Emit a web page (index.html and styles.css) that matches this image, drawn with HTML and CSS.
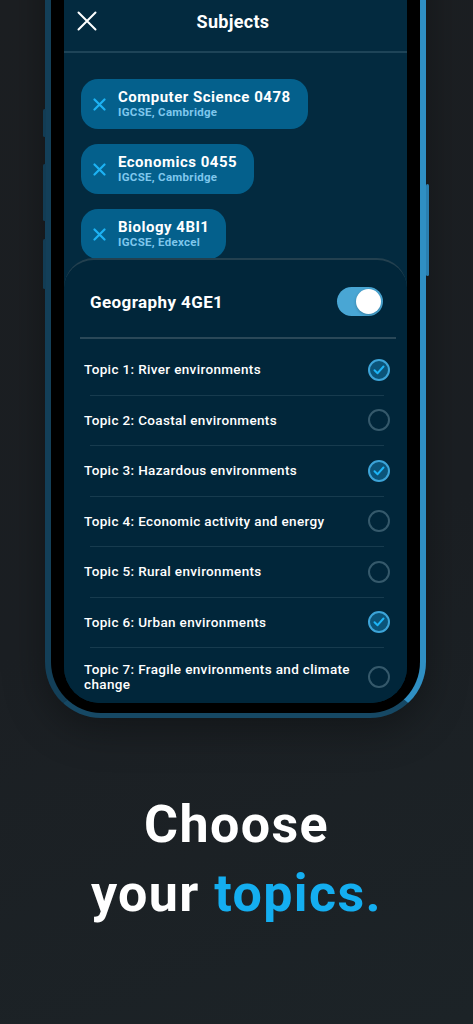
FILE: index.html
```html
<!DOCTYPE html>
<html lang="en">
<head>
<meta charset="utf-8">
<title>Choose your topics</title>
<link rel="stylesheet" href="styles.css">
</head>
<body>
<main class="page">
  <div class="phone">
    <span class="btn btn-l1"></span>
    <span class="btn btn-l2"></span>
    <span class="btn btn-l3"></span>
    <span class="btn btn-r1"></span>
    <div class="screen">
      <header class="app-header">
        <svg class="close" width="20" height="20" viewBox="0 0 20 20"><path d="M1.5 1.5 L18.5 18.5 M18.5 1.5 L1.5 18.5" stroke="#fff" stroke-width="2" stroke-linecap="round" fill="none"/></svg>
        <h1 class="title">Subjects</h1>
        <span></span>
      </header>
      <section class="chips">
        <div class="chip">
          <svg class="chip-x" width="13" height="13" viewBox="0 0 13 13"><path d="M1.5 1.5 L11.5 11.5 M11.5 1.5 L1.5 11.5" stroke="#1db2f3" stroke-width="2.2" stroke-linecap="round" fill="none"/></svg>
          <div class="chip-text"><div class="chip-title">Computer Science 0478</div><div class="chip-sub">IGCSE, Cambridge</div></div>
        </div>
        <div class="chip">
          <svg class="chip-x" width="13" height="13" viewBox="0 0 13 13"><path d="M1.5 1.5 L11.5 11.5 M11.5 1.5 L1.5 11.5" stroke="#1db2f3" stroke-width="2.2" stroke-linecap="round" fill="none"/></svg>
          <div class="chip-text"><div class="chip-title">Economics 0455</div><div class="chip-sub">IGCSE, Cambridge</div></div>
        </div>
        <div class="chip">
          <svg class="chip-x" width="13" height="13" viewBox="0 0 13 13"><path d="M1.5 1.5 L11.5 11.5 M11.5 1.5 L1.5 11.5" stroke="#1db2f3" stroke-width="2.2" stroke-linecap="round" fill="none"/></svg>
          <div class="chip-text"><div class="chip-title">Biology 4BI1</div><div class="chip-sub">IGCSE, Edexcel</div></div>
        </div>
      </section>
      <section class="sheet">
        <div class="sheet-head">
          <span class="subject">Geography 4GE1</span>
          <span class="toggle"><span class="knob"></span></span>
        </div>
        <div class="sheet-rule"></div>
        <ul class="topics">
          <li class="topic"><span>Topic 1: River environments</span><span class="check on"><svg width="12" height="10" viewBox="0 0 12 10"><path d="M1.5 5.2 L4.6 8.2 L10.5 1.5" stroke="#1cb4f6" stroke-width="2" fill="none" stroke-linecap="round" stroke-linejoin="round"/></svg></span></li>
          <li class="topic"><span>Topic 2: Coastal environments</span><span class="check"></span></li>
          <li class="topic"><span>Topic 3: Hazardous environments</span><span class="check on"><svg width="12" height="10" viewBox="0 0 12 10"><path d="M1.5 5.2 L4.6 8.2 L10.5 1.5" stroke="#1cb4f6" stroke-width="2" fill="none" stroke-linecap="round" stroke-linejoin="round"/></svg></span></li>
          <li class="topic"><span>Topic 4: Economic activity and energy</span><span class="check"></span></li>
          <li class="topic"><span>Topic 5: Rural environments</span><span class="check"></span></li>
          <li class="topic"><span>Topic 6: Urban environments</span><span class="check on"><svg width="12" height="10" viewBox="0 0 12 10"><path d="M1.5 5.2 L4.6 8.2 L10.5 1.5" stroke="#1cb4f6" stroke-width="2" fill="none" stroke-linecap="round" stroke-linejoin="round"/></svg></span></li>
          <li class="topic tall"><span>Topic 7: Fragile environments and climate change</span><span class="check"></span></li>
        </ul>
      </section>
    </div>
  </div>
  <h2 class="headline">Choose<br>your <span class="accent">topics.</span></h2>
</main>
</body>
</html>
```

FILE: styles.css
```css
* { box-sizing: border-box; }
html, body { margin: 0; padding: 0; }
body {
  width: 473px;
  height: 1024px;
  overflow: hidden;
  background: linear-gradient(160deg, #1c1f22 0%, #1b1f23 55%, #1c2327 100%);
  font-family: Roboto, "Liberation Sans", sans-serif;
  color: #fff;
}
.page {
  display: flex;
  flex-direction: column;
  align-items: flex-start;
}
.phone {
  position: relative;
  margin: -90px 0 0 45px;
  width: 381px;
  height: 808px;
  border-style: solid;
  border-width: 6px 6px 5px 6px;
  border-color: #133f58 #2f8fc3 #164864 #133f58;
  border-radius: 56px;
  background: #000;
  padding: 13px 13px 10px 13px;
  box-shadow: 0 10px 40px rgba(0,0,0,0.35);
}
.btn {
  position: absolute;
  width: 3px;
  border-radius: 2px;
}
.btn-l1 { left: -8px; top: 193px; height: 28px; background: #123c54; }
.btn-l2 { left: -8px; top: 248px; height: 57px; background: #123c54; }
.btn-l3 { left: -8px; top: 323px; height: 50px; background: #123c54; }
.btn-r1 { right: -9px; top: 268px; height: 92px; background: #2a7fb0; }
.screen {
  width: 343px;
  height: 774px;
  border-radius: 36px;
  overflow: hidden;
  background: #032a3f;
  display: flex;
  flex-direction: column;
}
.app-header {
  flex: none;
  height: 124px;
  padding: 71px 13px 9px 13px;
  display: grid;
  grid-template-columns: 1fr auto 1fr;
  align-items: center;
  border-bottom: 2px solid #1e4458;
}
.close { display: block; }
.title {
  margin: 0 5px 0 0;
  font-size: 18px;
  font-weight: 700;
  letter-spacing: 0.3px;
}
.chips {
  flex: none;
  padding: 26px 0 0 17px;
  display: flex;
  flex-direction: column;
  align-items: flex-start;
  gap: 15px;
}
.chip {
  height: 50px;
  background: #04608c;
  border-radius: 17px;
  padding: 0 17px 0 12px;
  display: flex;
  align-items: center;
  gap: 12px;
}
.chip-x { display: block; flex: none; }
.chip-title {
  font-size: 15px;
  font-weight: 700;
  line-height: 17px;
  letter-spacing: 0.5px;
}
.chip-sub {
  font-size: 11.5px;
  font-weight: 700;
  line-height: 13px;
  color: #7fc7ec;
  letter-spacing: 0.3px;
}
.sheet {
  flex: none;
  margin-top: -1px;
  background: #01263a;
  border-top: 2px solid #23404f;
  border-radius: 30px 30px 0 0;
  position: relative;
}
.sheet-head {
  height: 77px;
  padding: 6px 24px 0 26px;
  display: flex;
  align-items: center;
  justify-content: space-between;
}
.subject {
  font-size: 17px;
  font-weight: 700;
  letter-spacing: 0.4px;
}
.toggle {
  position: relative;
  width: 46px;
  height: 29px;
  border-radius: 15px;
  background: #49a6d4;
  display: flex;
  align-items: center;
  justify-content: flex-end;
  padding: 2px;
}
.knob {
  width: 25px;
  height: 25px;
  border-radius: 50%;
  background: #fff;
  box-shadow: 0 1px 3px rgba(0,0,0,0.25);
}
.sheet-rule {
  height: 2px;
  margin: 0 11px 0 16px;
  background: #2a4858;
}
.topics {
  list-style: none;
  margin: 0;
  padding: 6px 0 0 0;
}
.topic {
  height: 50.5px;
  margin: 0 23px 0 26px;
  display: flex;
  align-items: center;
  justify-content: space-between;
  border-bottom: 1px solid #173b4e;
  font-size: 13.5px;
  font-weight: 500;
  letter-spacing: 0.35px;
  line-height: 15px;
}
.topic > span:first-child {
  margin-left: -6px;
  max-width: 275px;
}
.topic .check { margin-right: -6px; }
.topic.tall { height: 57px; border-bottom: none; }
.check {
  flex: none;
  width: 22px;
  height: 22px;
  border-radius: 50%;
  border: 2px solid #35596b;
  display: flex;
  align-items: center;
  justify-content: center;
}
.check.on {
  border-color: #3ca4d8;
  background: #0b5479;
}
.check svg { display: block; }
.headline {
  align-self: stretch;
  margin: 72px 0 0 0;
  text-align: center;
  font-size: 52px;
  font-weight: 700;
  line-height: 69px;
  letter-spacing: 1.4px;
  color: #fff;
}
.accent { color: #14aef0; }
```
